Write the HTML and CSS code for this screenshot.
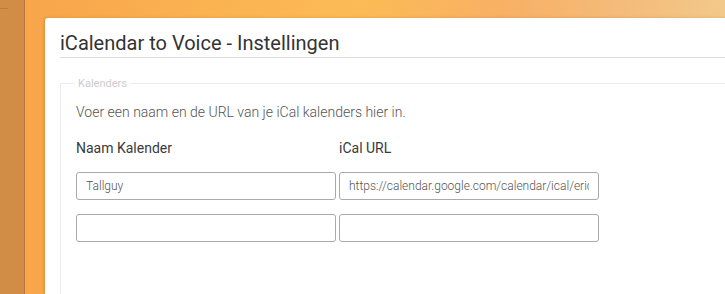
FILE: index.html
```html
<!DOCTYPE html>
<html lang="nl">
<head>
  <meta charset="UTF-8">
  <meta name="viewport" content="width=device-width, initial-scale=1.0">
  <title>iCalendar to Voice - Instellingen</title>
  <link rel="stylesheet" href="styles.css">
</head>
<body>

  <div class="side">
    <span class="side-mark"></span>
  </div>

  <div class="main">
    <div class="card">
      <h1 class="title">iCalendar to Voice - Instellingen</h1>

      <fieldset class="group">
        <legend>Kalenders</legend>
        <p class="intro">Voer een naam en de URL van je iCal kalenders hier in.</p>

        <div class="cal-grid">
          <label class="col-label">Naam Kalender</label>
          <label class="col-label">iCal URL</label>

          <input type="text" class="field" value="Tallguy">
          <input type="text" class="field" value="https://calendar.google.com/calendar/ical/eric.tallguy%40gmail.com/private/basic.ics">

          <input type="text" class="field" value="">
          <input type="text" class="field" value="">
        </div>
      </fieldset>
    </div>
  </div>

</body>
</html>
```

FILE: styles.css
```css
* {
  margin: 0;
  padding: 0;
  box-sizing: border-box;
}

body {
  font-family: Roboto, "Liberation Sans", Arial, sans-serif;
  display: flex;
  height: 100vh;
  overflow: hidden;
  background-color: #f9a94f;
}

.side {
  width: 25px;
  flex-shrink: 0;
  background-color: #d18d46;
  border-right: 1px solid #b97838;
  padding-top: 8px;
}

.side-mark {
  display: block;
  width: 8px;
  border-top: 1px solid #c07c3a;
}

.main {
  flex: 1;
  padding: 18px 0 0 20px;
  background: linear-gradient(90deg, #f8a54b 0%, #fbb452 30%, #fcbb56 48%, #f8b064 68%, #f4bb7a 85%, #f2c98a 100%);
}

.card {
  height: 100%;
  background-color: #fff;
  border-radius: 3px 0 0 0;
  padding: 14px 0 0 15px;
  box-shadow: -1px 0 3px rgba(120, 60, 0, 0.25);
}

.title {
  font-size: 20px;
  line-height: 22px;
  font-weight: 400;
  color: #333;
  padding-bottom: 3px;
  border-bottom: 1px solid #dcdcdc;
}

.group {
  margin-top: 19px;
  border: 1px solid #ececec;
  border-right: none;
  border-bottom: none;
  padding: 12px 0 60px 15px;
}

.group legend {
  font-size: 11px;
  line-height: 13px;
  color: #cbcbcb;
  padding: 0 3px;
  margin-left: -1px;
}

.intro {
  font-size: 14px;
  line-height: 20px;
  font-weight: 300;
  color: #555;
}

.cal-grid {
  display: grid;
  grid-template-columns: 260px 260px;
  column-gap: 3px;
  row-gap: 14px;
  margin-top: 16px;
}

.col-label {
  font-size: 14px;
  line-height: 20px;
  font-weight: 400;
  color: #3a3a3a;
}

.field {
  height: 28px;
  width: 100%;
  border: 1px solid #aaa;
  border-radius: 3px;
  padding: 0 9px;
  font-family: Roboto, "Liberation Sans", Arial, sans-serif;
  font-size: 12px;
  font-weight: 300;
  color: #555;
  background-color: #fff;
  outline: none;
}
```
